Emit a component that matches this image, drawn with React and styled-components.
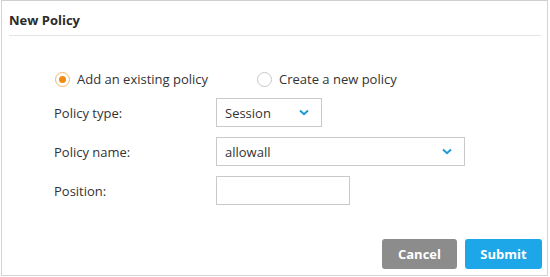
import React from "react";
import styled, { createGlobalStyle } from "styled-components";

const Global = createGlobalStyle`
  html, body { margin: 0; padding: 0; background: #fff; }
  body { font-family: "Open Sans", "Noto Sans", sans-serif; color: #333; }
`;

const Panel = styled.div`
  box-sizing: border-box;
  width: 547px;
  height: 276px;
  margin-left: 1px;
  border: 1px solid #d4d4d4;
  border-top-color: #cfcfcf;
  display: flex;
  flex-direction: column;
`;

const Header = styled.div`
  margin: 0 6px 0 7px;
  height: 34px;
  border-bottom: 1px solid #e4e4e4;
  display: flex;
  align-items: center;
`;

const Title = styled.h1`
  margin: 0;
  font-size: 13px;
  font-weight: 700;
  color: #2b2b2b;
  padding-top: 3px;
`;

const RadioRow = styled.div`
  display: flex;
  align-items: center;
  margin: 35px 0 0 53px;
  height: 16px;
`;

const RadioLabel = styled.label`
  display: flex;
  align-items: center;
  gap: 7px;
  font-size: 13px;
  color: #333;
  width: ${(p) => p.$w || "auto"};
`;

const Circle = styled.span`
  box-sizing: border-box;
  width: 15px;
  height: 15px;
  border-radius: 50%;
  border: 1px solid ${(p) => (p.$on ? "#f6b868" : "#c8c8c8")};
  display: flex;
  align-items: center;
  justify-content: center;
  &::after {
    content: "";
    width: 7px;
    height: 7px;
    border-radius: 50%;
    background: ${(p) => (p.$on ? "#f08c14" : "transparent")};
  }
`;

const Form = styled.div`
  display: grid;
  grid-template-columns: 162px auto;
  row-gap: 10px;
  margin: 11px 0 0 52px;
  align-items: center;
`;

const Label = styled.div`
  font-size: 13px;
  color: #333;
`;

const Box = styled.div`
  box-sizing: border-box;
  width: ${(p) => p.$w}px;
  height: 29px;
  border: 1px solid #c9c9c9;
  background: #fff;
  display: flex;
  align-items: center;
  justify-content: space-between;
  padding: 0 12px 0 8px;
  font-size: 13px;
  color: #333;
`;

const Chevron = () => (
  <svg width="10" height="7" viewBox="0 0 10 7">
    <path d="M1 1.5 L5 5.2 L9 1.5" fill="none" stroke="#1a9bd7" strokeWidth="2" />
  </svg>
);

const Footer = styled.div`
  margin-top: auto;
  display: flex;
  justify-content: flex-end;
  gap: 8px;
  padding: 0 5px 6px 0;
`;

const Button = styled.button`
  box-sizing: border-box;
  width: ${(p) => p.$w}px;
  height: 30px;
  border: none;
  border-radius: 3px;
  background: ${(p) => p.$bg};
  color: #fff;
  font-family: "Open Sans", sans-serif;
  font-size: 13px;
  font-weight: 700;
`;

export default function App() {
  return (
    <>
      <Global />
      <Panel>
        <Header>
          <Title>New Policy</Title>
        </Header>
        <RadioRow>
          <RadioLabel $w="202px">
            <Circle $on />
            Add an existing policy
          </RadioLabel>
          <RadioLabel>
            <Circle />
            Create a new policy
          </RadioLabel>
        </RadioRow>
        <Form>
          <Label>Policy type:</Label>
          <Box $w={106}>
            Session
            <Chevron />
          </Box>
          <Label>Policy name:</Label>
          <Box $w={249}>
            allowall
            <Chevron />
          </Box>
          <Label>Position:</Label>
          <Box $w={134} />
        </Form>
        <Footer>
          <Button $w={75} $bg="#8c8c8c">Cancel</Button>
          <Button $w={77} $bg="#1ea7e8">Submit</Button>
        </Footer>
      </Panel>
    </>
  );
}
